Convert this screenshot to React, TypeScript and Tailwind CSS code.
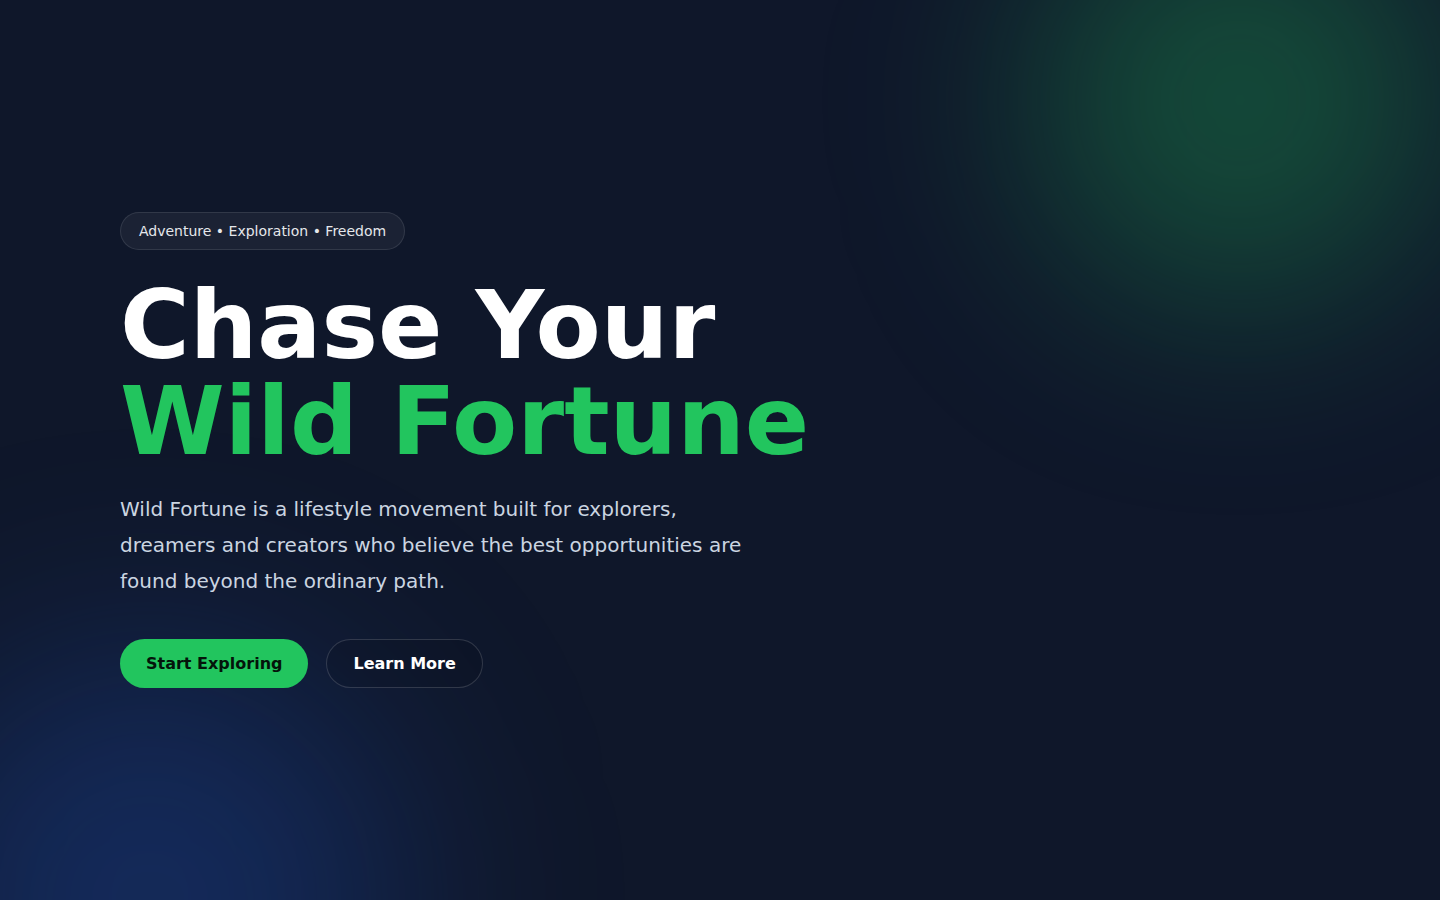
export default function App() {
  return (
    <main
      className="relative min-h-screen overflow-hidden bg-[#0f172a] text-white"
      style={{ fontFamily: '"DejaVu Sans", sans-serif' }}
    >
      {/* glows */}
      <div className="pointer-events-none absolute left-[1030px] top-[-110px] h-[420px] w-[420px] rounded-full bg-[#22c55e]/30 blur-[100px]" />
      <div className="pointer-events-none absolute left-[-100px] top-[650px] h-[500px] w-[500px] rounded-full bg-[#2563eb]/25 blur-[110px]" />

      <section className="relative flex min-h-screen items-center px-[120px]">
        <div className="flex flex-col items-start">
          <span className="rounded-full border border-white/10 bg-white/5 px-[18px] py-2 text-sm text-[#e5e7eb]">
            Adventure • Exploration • Freedom
          </span>

          <h1 className="mt-[27px] text-[95px] font-bold leading-[96px]">
            Chase Your
            <br />
            <span className="text-[#22c55e]">Wild Fortune</span>
          </h1>

          <p className="mt-[22px] max-w-[640px] text-xl leading-[1.8] text-[#cbd5e1]">
            Wild Fortune is a lifestyle movement built for explorers, dreamers and creators who believe
            the best opportunities are found beyond the ordinary path.
          </p>

          <div className="mt-10 flex items-center gap-[18px]">
            <button className="h-[49px] rounded-full bg-[#22c55e] px-[26px] text-base font-bold text-[#04140a]">
              Start Exploring
            </button>
            <button className="h-[49px] rounded-full border border-white/15 bg-black/10 px-[26px] text-base font-bold text-white">
              Learn More
            </button>
          </div>
        </div>
      </section>
    </main>
  );
}
